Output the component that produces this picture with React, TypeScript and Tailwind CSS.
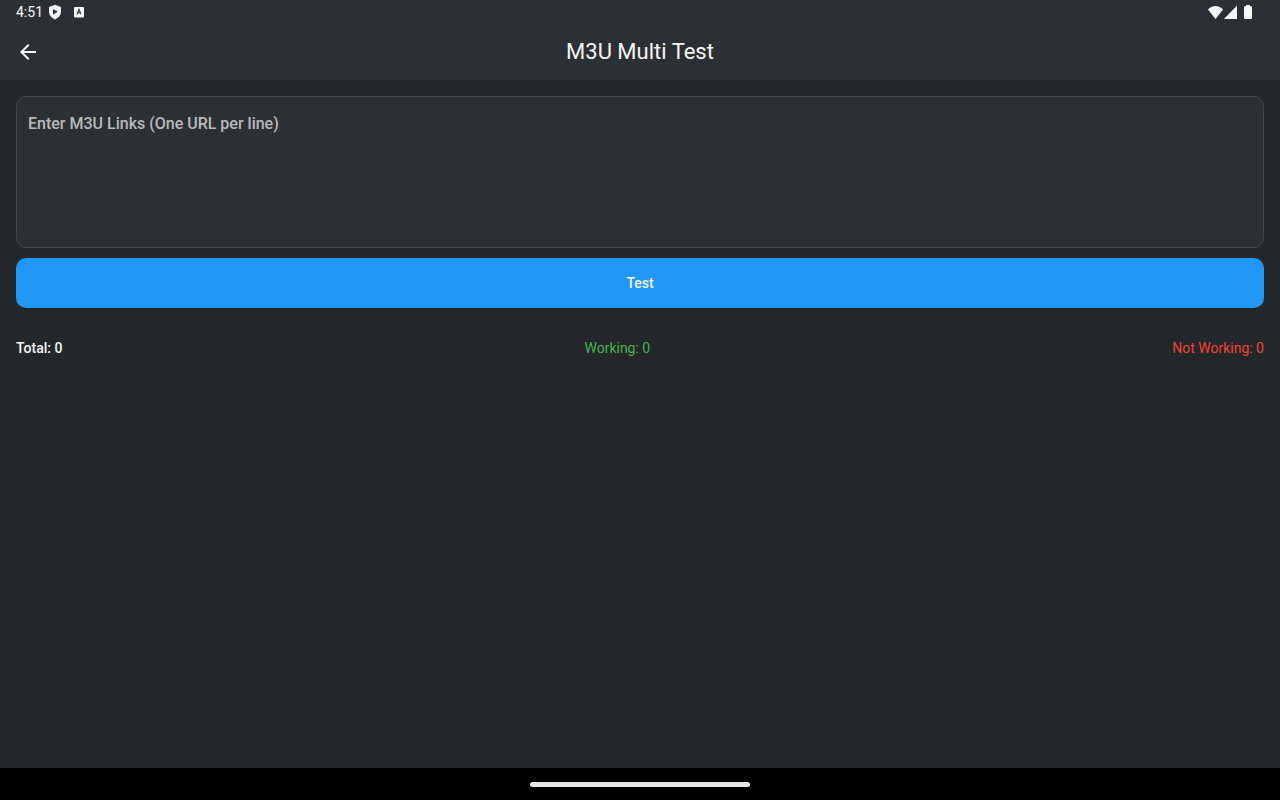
import { useState } from "react"

function StatusBar() {
  return (
    <div className="flex h-6 items-center justify-between pl-4 pr-7">
      <div className="flex items-center">
        <span className="text-sm leading-6">4:51</span>
        <svg className="ml-1.5 h-4 w-3" viewBox="0 0 12 16" fill="currentColor" aria-hidden="true">
          <path fillRule="evenodd" d="M6 .8 12 3v4.6c0 3.500-2.500 6.500-6 7.800C2.500 14.100 0 11.100 0 7.600V3L6 .8ZM4 5v5.400L8.800 7.700 4 5Z" />
        </svg>
        <svg className="ml-3 h-3 w-3" viewBox="0 0 12 12" aria-hidden="true">
          <rect x="1" y="1" width="10" height="10.500" rx="1" fill="currentColor" />
          <path d="M4 8.200 6 3.400l2 4.800M4.700 6.800h2.600" fill="none" stroke="#2c2f34" strokeWidth="1.100" />
        </svg>
      </div>
      <div className="flex items-center">
        <svg className="h-4 w-4" viewBox="0 0 16 16" fill="currentColor" aria-hidden="true">
          <path d="M7.500 15 0 5.400C2 3.300 4.600 2 7.500 2S13 3.300 15 5.400L7.500 15Z" />
        </svg>
        <svg className="h-4 w-4" viewBox="0 0 16 16" fill="currentColor" aria-hidden="true">
          <path d="M13 1.500V15H0L13 1.500Z" />
        </svg>
        <svg className="ml-1 h-4 w-2" viewBox="0 0 8 16" fill="currentColor" aria-hidden="true">
          <path d="M2 1h4v1.200h1q1 0 1 1V14q0 1-1 1H1q-1 0-1-1V3.200q0-1 1-1h1V1Z" />
        </svg>
      </div>
    </div>
  )
}

export default function App() {
  const [links, setLinks] = useState("")
  const [total, setTotal] = useState(0)

  const runTest = () => {
    setTotal(links.split("\n").filter((line) => line.trim()).length)
  }

  return (
    <div className="flex min-h-screen flex-col bg-[#232729] font-[Roboto,sans-serif] text-[#f5f5f5]">
      <header className="bg-[#2c2f34]">
        <StatusBar />
        <div className="grid h-14 grid-cols-[56px_1fr_56px] items-center">
          <button type="button" aria-label="Back" className="flex h-14 w-14 items-center justify-center">
            <svg className="h-6 w-6" viewBox="0 0 24 24" fill="currentColor" aria-hidden="true">
              <path d="M20 11H7.830l5.590-5.590L12 4l-8 8 8 8 1.410-1.410L7.830 13H20v-2Z" />
            </svg>
          </button>
          <h1 className="text-center text-[22px] leading-7">M3U Multi Test</h1>
        </div>
      </header>

      <main className="flex-1 p-4">
        <textarea
          aria-label="M3U links"
          value={links}
          onChange={(e) => setLinks(e.target.value)}
          placeholder="Enter M3U Links (One URL per line)"
          className="block h-38 w-full resize-none rounded-[10px] border border-[#49454f] bg-[#2c2f34] px-[11px] py-[15px] text-base font-medium outline-none placeholder:text-[#b9babb]"
        />
        <button
          type="button"
          onClick={runTest}
          className="mt-2.5 h-[50px] w-full rounded-[10px] bg-[#2196f3] text-sm font-medium"
        >
          Test
        </button>

        {/* Results */}
        <div className="mt-[30px] flex justify-between text-sm">
          <p className="font-medium">Total: {total}</p>
          <p className="text-[#4caf50]">Working: 0</p>
          <p className="text-[#f44336]">Not Working: 0</p>
        </div>
      </main>

      {/* Gesture bar */}
      <div className="flex h-8 items-center justify-center bg-black">
        <div className="h-[5px] w-[220px] rounded-full bg-[#e6e6e6]" />
      </div>
    </div>
  )
}
